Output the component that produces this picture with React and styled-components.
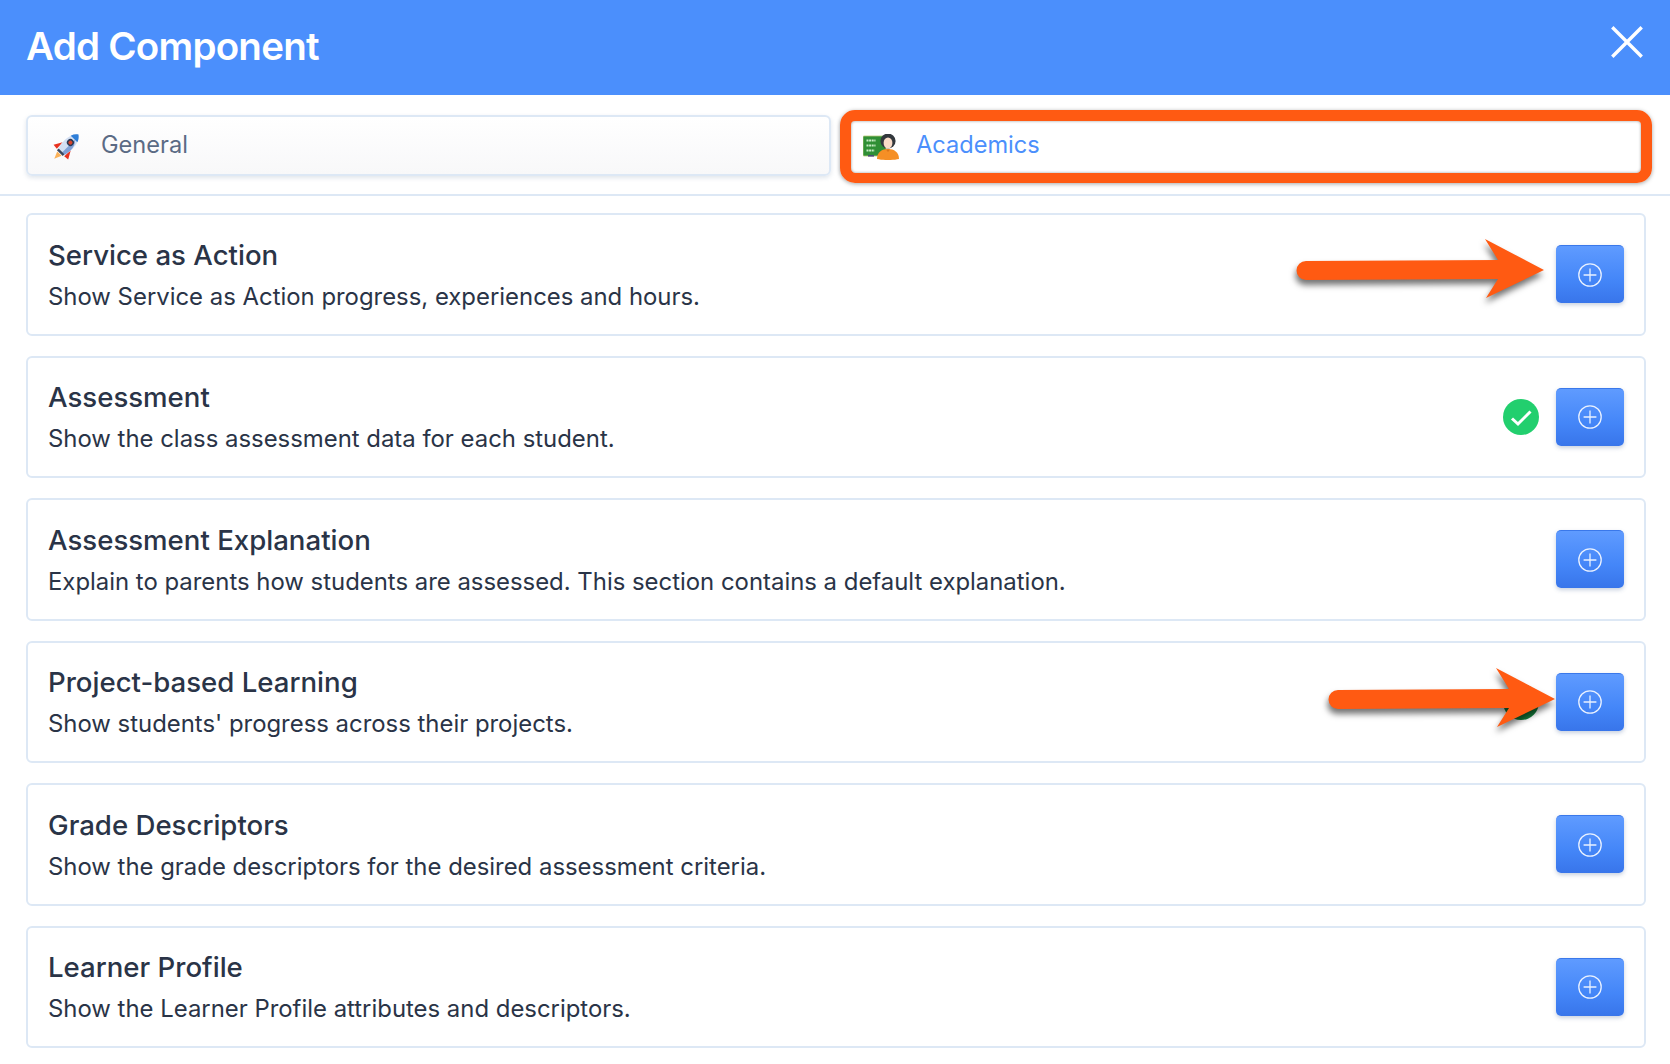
import React from 'react';
import styled, { createGlobalStyle } from 'styled-components';

const GlobalStyle = createGlobalStyle`
  html, body {
    margin: 0;
    background: #fff;
    font-family: Inter, "Liberation Sans", sans-serif;
  }
`;

const components = [
  { title: 'Service as Action', text: 'Show Service as Action progress, experiences and hours.', arrow: 'long' },
  { title: 'Assessment', text: 'Show the class assessment data for each student.', added: true },
  { title: 'Assessment Explanation', text: 'Explain to parents how students are assessed. This section contains a default explanation.' },
  { title: 'Project-based Learning', text: "Show students' progress across their projects.", arrow: 'short', hiddenCheck: true },
  { title: 'Grade Descriptors', text: 'Show the grade descriptors for the desired assessment criteria.' },
  { title: 'Learner Profile', text: 'Show the Learner Profile attributes and descriptors.' },
];

const RocketIcon = () => (
  <svg width="28" height="30" viewBox="0 0 27 28">
    <g transform="rotate(45 13.5 14)">
      <path d="M8 13 L3.5 21 L8.5 21.5 Z" fill="#e8321f" />
      <path d="M19 13 L23.5 21 L18.5 21.5 Z" fill="#e8321f" />
      <path d="M13.5 -3 C18.5 1 19.5 7 19 14 L18 20 L9 20 L8 14 C7.5 7 8.5 1 13.5 -3 Z" fill="#d3dff3" />
      <path d="M13.5 -3 C15.7 -1.4 17.2 .6 18 3 L9 3 C9.8 .6 11.3 -1.4 13.5 -3 Z" fill="#2f7fd8" />
      <path d="M14.5 3 C17.5 5 19 9 19 14 L18 20 L14.5 20 Z" fill="#7f9fd6" />
      <circle cx="13.5" cy="8" r="3.4" fill="#2b3a55" />
      <circle cx="13.5" cy="8" r="2" fill="#d9432a" />
      <rect x="9.5" y="20" width="8" height="2.4" fill="#38465f" />
      <path d="M10.5 23 L16.5 23 L13.5 30 Z" fill="#fbb25a" />
    </g>
  </svg>
);

const TeacherIcon = () => (
  <svg width="37" height="26" viewBox="0 0 37 26">
    <rect x="0" y="2" width="23" height="20" rx="1" fill="#2f8f35" stroke="#b9c97a" strokeWidth="0.8" />
    <path d="M3.5 6.5h9M3.5 11.5h9M3.5 16.5h8" stroke="#c8ecc4" strokeWidth="2" strokeDasharray="2 .6" />
    <rect x="5" y="21" width="6" height="1.6" fill="#4a4a78" />
    <ellipse cx="25" cy="7" rx="7.6" ry="7.4" fill="#33383d" />
    <path d="M14 25 C14 18 19 15 25 15 C31 15 36 18 36 25 C30 26.4 20 26.4 14 25 Z" fill="#f58f25" />
    <ellipse cx="25" cy="9" rx="4.4" ry="5.6" fill="#fbdcc8" />
    <path d="M23 15.5 L25 18 L27 15.5 Z" fill="#d9731a" />
  </svg>
);

const PlusCircleIcon = () => (
  <svg width="24" height="24" viewBox="0 0 24 24" fill="none" stroke="#e9f1ff" strokeWidth="1.3">
    <circle cx="12" cy="12" r="11.2" />
    <path d="M12 5.6v12.8M5.6 12h12.8" />
  </svg>
);

const CheckBadge = ({ dark }) => (
  <CheckWrap>
    <svg width="36" height="36" viewBox="0 0 36 36">
      <circle cx="18" cy="18" r="18" fill={dark ? '#15803d' : '#22cf6e'} />
      <path d="M9 19.5 L15 25 L27.5 12.5" fill="none" stroke="#fff" strokeWidth="3" />
    </svg>
  </CheckWrap>
);

const CloseIcon = () => (
  <svg width="32" height="32" viewBox="0 0 32 32" stroke="#fff" strokeWidth="3.4" strokeLinecap="square">
    <path d="M2.5 2.5 L29.5 29.5 M29.5 2.5 L2.5 29.5" />
  </svg>
);

// hand-drawn callout arrow; tail length varies between the two rows
const Arrow = ({ length }) => (
  <ArrowSvg $long={length === 248} width={length + 24} height="84" viewBox={`0 0 ${length + 24} 84`}>
    <path
      d={`M10 32 L${length - 46} 31 L${length - 59} 10 L${length} 41 L${length - 58} 69 L${length - 46} 50 L10 51 A9.5 9.5 0 0 1 10 32 Z`}
      fill="#ff5a12"
    />
  </ArrowSvg>
);

export default function App() {
  return (
    <>
      <GlobalStyle />
      <Header>
        <Title>Add Component</Title>
        <CloseButton><CloseIcon /></CloseButton>
      </Header>
      <Tabs>
        <Tab>
          <TabIcon $shift={24}><RocketIcon /></TabIcon>
          General
        </Tab>
        <Tab $active>
          <TabIcon $shift={20}><TeacherIcon /></TabIcon>
          Academics
        </Tab>
      </Tabs>
      <List>
        {components.map((item) => (
          <Card key={item.title}>
            <Copy>
              <CardTitle>{item.title}</CardTitle>
              <CardText>{item.text}</CardText>
            </Copy>
            {item.added && <CheckBadge />}
            {item.hiddenCheck && <CheckBadge dark />}
            {item.arrow && <Arrow length={item.arrow === 'long' ? 248 : 227} />}
            <AddButton><PlusCircleIcon /></AddButton>
          </Card>
        ))}
      </List>
    </>
  );
}

const Header = styled.header`
  height: 95px;
  background: #4b8ffc;
  display: flex;
  align-items: center;
  justify-content: space-between;
  padding: 0 27px 0 26px;
  box-sizing: border-box;
`;

const Title = styled.h1`
  margin: -4px 0 0;
  color: #fff;
  font-size: 38.5px;
  font-weight: 600;
  letter-spacing: -0.75px;
`;

const CloseButton = styled.div`
  display: flex;
  margin-top: -12px;
`;

const Tabs = styled.div`
  display: flex;
  gap: 10px;
  padding: 20px 24px 18px 26px;
  border-bottom: 2px solid #dde8f5;
`;

const Tab = styled.div`
  flex: 1;
  height: 61px;
  box-sizing: border-box;
  display: flex;
  align-items: center;
  position: relative;
  padding-bottom: 2px;
  border: 2px solid #dde8f5;
  border-radius: 6px;
  font-size: 23.6px;
  color: ${(p) => (p.$active ? '#4b8ffc' : '#5b6b85')};
  background: ${(p) => (p.$active ? '#fff' : 'linear-gradient(#ffffff, #f8f8f9)')};
  box-shadow: 0 2px 4px rgba(120, 140, 170, 0.22);

  ${(p) => p.$active && `
    &::after {
      content: '';
      position: absolute;
      top: -7px;
      left: -3px;
      right: -8px;
      bottom: -9px;
      border: 11px solid #ff5a12;
      border-bottom-width: 10px;
      border-radius: 15px;
      box-shadow: 0 1px 4px rgba(0, 0, 0, 0.35), inset 0 0 3px rgba(0, 0, 0, 0.4);
    }
  `}
`;

const TabIcon = styled.span`
  width: 73px;
  padding-left: ${(p) => p.$shift}px;
  box-sizing: border-box;
  display: flex;
  align-items: center;
  margin-top: 4px;
`;

const List = styled.div`
  display: flex;
  flex-direction: column;
  gap: 20px;
  padding: 17px 24px 0 26px;
`;

const Card = styled.div`
  height: 122.5px;
  box-sizing: border-box;
  display: flex;
  align-items: center;
  position: relative;
  padding: 0 20px 0 20px;
  border: 2px solid #dde8f5;
  border-radius: 6px;
`;

const Copy = styled.div`
  flex: 1;
  padding-top: 2px;
`;

const CardTitle = styled.div`
  font-size: 27.6px;
  font-weight: 500;
  line-height: 36px;
  color: #2a3447;
`;

const CardText = styled.div`
  margin-top: 7px;
  font-size: 23.9px;
  line-height: 34px;
  color: #2a3447;
`;

const CheckWrap = styled.div`
  display: flex;
  margin-right: 17px;
`;

const AddButton = styled.div`
  width: 68px;
  height: 58px;
  box-sizing: border-box;
  display: flex;
  align-items: center;
  justify-content: center;
  position: relative;
  border-radius: 5px;
  background: linear-gradient(#5f9bff, #4486f8 60%, #3875ea);
  border-top: 1px solid #3a78ea;
  box-shadow: 0 2px 4px rgba(70, 100, 150, 0.3);
`;

const ArrowSvg = styled.svg`
  position: absolute;
  right: ${(p) => (p.$long ? 76 : 65)}px;
  top: 50%;
  margin-top: ${(p) => (p.$long ? -45 : -44)}px;
  filter: drop-shadow(-1px 5px 3px rgba(0, 0, 0, 0.55));
  pointer-events: none;
`;
